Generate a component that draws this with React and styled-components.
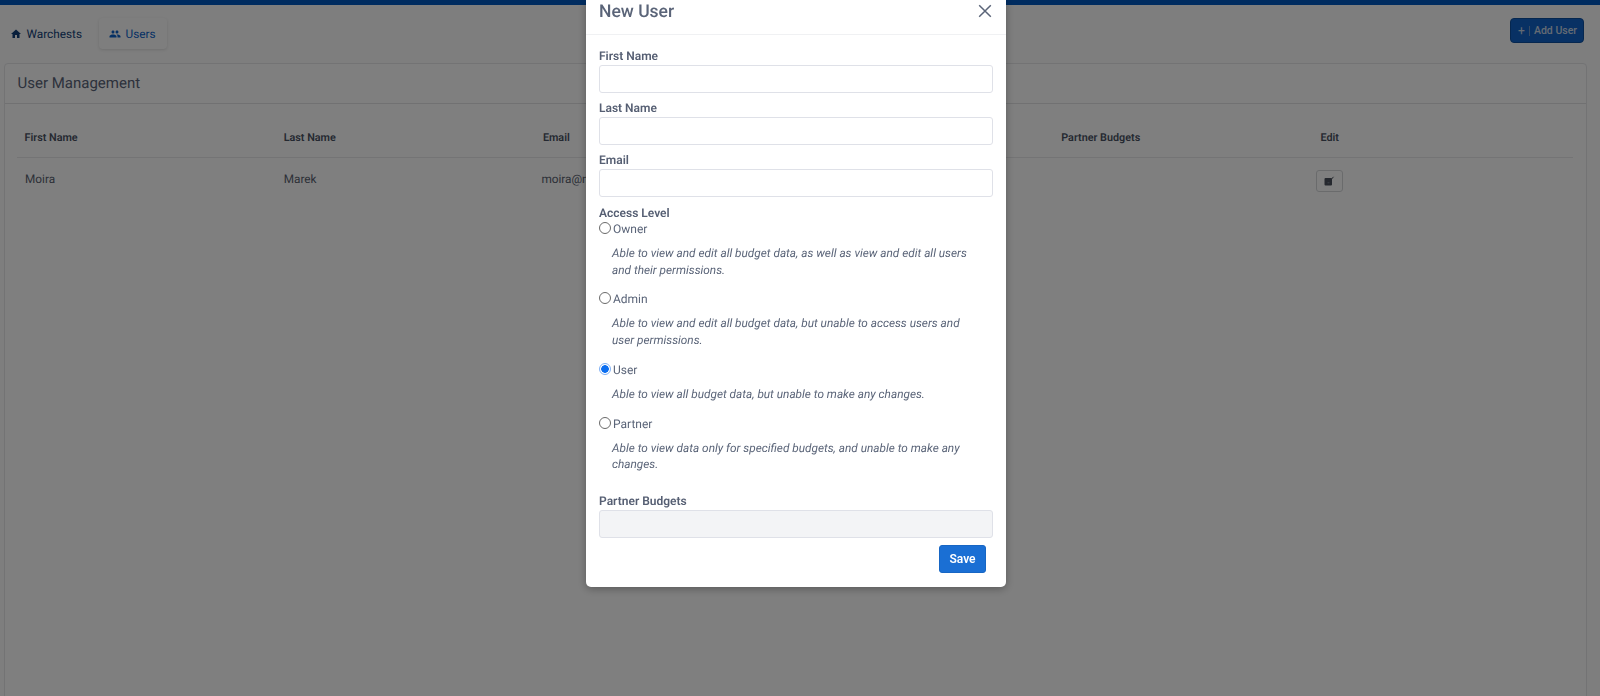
import React from "react";
import styled, { createGlobalStyle } from "styled-components";
import { MdHome, MdPeople } from "react-icons/md";

const Global = createGlobalStyle`
  html, body { margin: 0; padding: 0; height: 100%; overflow: hidden; }
  body {
    font-family: Roboto, "Liberation Sans", sans-serif; background: #fcfcfc; color: #4a5568;
    text-rendering: geometricPrecision;
  }
  * { box-sizing: border-box; }
`;

const TopBar = styled.div`height: 5px; background: #0059c1;`;
const Toolbar = styled.div`
  display: flex; justify-content: space-between; align-items: flex-start;
  height: 58px; padding: 13px 16px 0 0;
`;
const Nav = styled.nav`display: flex; align-items: center; gap: 6px;`;
const NavItem = styled.a`
  display: flex; align-items: center; gap: 4.5px; height: 31px; padding: 0 11px 0 10px;
  font-size: 11.8px; border-radius: 4px;
  color: ${p => (p.$active ? "#0a61c9" : "#123f78")};
  background: ${p => (p.$active ? "#fdfdfd" : "transparent")};
  box-shadow: ${p => (p.$active ? "0 1px 3px rgba(0,0,0,.12)" : "none")};
`;
const AddButton = styled.button`
  display: flex; align-items: center; width: 74px; height: 25px; padding: 0 6px 0 7px;
  background: #1163c9; border: 1px solid #0d4f9f; border-radius: 4px;
  color: #c9d6e6; font: 500 10.5px Roboto, sans-serif; white-space: nowrap;
`;
const Plus = styled.span`font-size: 12px; font-weight: 400;`;
const Divider = styled.span`
  width: 1px; height: 10px; background: #6d94c6; margin: 0 5px 0 4px;
`;
const Card = styled.section`
  margin: 0 13px 0 4px; height: 640px; background: #fff;
  border: 1px solid #e6e7e9; border-radius: 4px;
`;
const CardHeader = styled.header`
  height: 40px; padding: 0 0 2px 12.5px; display: flex; align-items: center;
  font-size: 15px; color: #5a6478; border-bottom: 1px solid #e2e3e5;
`;
const TableWrap = styled.div`padding: 14px 13px 0 12px;`;
const Row = styled.div`
  display: grid; grid-template-columns: repeat(6, 259.2px);
  align-items: center; height: ${p => p.$h}px;
  border-bottom: ${p => (p.$line ? "1px solid #e8e9eb" : "none")};
`;
const Head = styled.div`padding-left: 7.5px; font-size: 10.8px; font-weight: 600; color: #4a5263;`;
const Cell = styled.div`
  padding-left: ${p => p.$indent ?? 7.5}px; font-size: 11.8px; color: #59616f; white-space: nowrap;
`;
const EditButton = styled.button`
  width: 27px; height: 22px; margin: 4px 0 0 -4.5px; padding: 0; display: flex; align-items: center; justify-content: center;
  background: transparent; border: 1px solid #d4d6d9; border-radius: 3px;
`;

const Overlay = styled.div`
  position: fixed; inset: 0; background: rgba(0,0,0,.5); padding-right: 8px;
  display: flex; justify-content: center; align-items: flex-start;
`;
const Modal = styled.div`
  width: 420px; height: 587px; background: #fff; border-radius: 0 0 5px 5px;
  box-shadow: 0 2px 8px rgba(0,0,0,.3);
`;
const ModalHeader = styled.div`
  display: flex; justify-content: space-between; align-items: center;
  height: 35px; padding: 0 14px 12px 13px; border-bottom: 1px solid #f0f1f3;
`;
const Title = styled.h2`margin: 2px 0 0; font-size: 17.5px; font-weight: 500; color: #5a6478;`;
const Form = styled.div`padding: 14px 13px 0;`;
const Label = styled.div`
  font-size: 12px; font-weight: 600; line-height: 14px; color: #565f73;
  margin-top: ${p => p.$mt || 0}px;
`;
const TextInput = styled.div`
  height: 28px; margin-top: 2px; border: 1px solid #dfe1e8; border-radius: 3px;
  background: ${p => (p.$disabled ? "#f3f4f6" : "#fff")};
`;
const RadioRow = styled.div`
  display: flex; align-items: center; gap: 2px; height: 14px;
  margin-top: ${p => p.$mt || 0}px;
  font-size: 12px; color: #5a6478;
`;
const Radio = styled.span`
  width: 12px; height: 12px; border-radius: 50%; margin-top: -2px;
  border: 1px solid ${p => (p.$on ? "#7fb0f5" : "#6a6a6a")};
  background: ${p => (p.$on ? "radial-gradient(circle, #0b6ef0 3.5px, #fff 4.1px)" : "#fff")};
`;
const Desc = styled.p`
  margin: 9px 0 0 13px; font-size: 11.8px; line-height: 16.7px; font-style: italic; color: #5a6478; width: 372px;
`;
const Actions = styled.div`display: flex; justify-content: flex-end; padding: 7px 7px 0 0;`;
const SaveButton = styled.button`
  width: 47px; height: 28px; padding: 1px 0 0; background: #1a6fd4; border: 1px solid #1766c4; border-radius: 3px;
  color: #fff; font: 600 12px Roboto, sans-serif;
`;

const roles = [
  { name: "Owner", mt: 2, text: "Able to view and edit all budget data, as well as view and edit all users and their permissions." },
  { name: "Admin", mt: 14, text: "Able to view and edit all budget data, but unable to access users and user permissions." },
  { name: "User", mt: 14, on: true, text: "Able to view all budget data, but unable to make any changes." },
  { name: "Partner", mt: 14, text: "Able to view data only for specified budgets, and unable to make any changes." },
];

const EditGlyph = () => (
  <svg width="12" height="12" viewBox="0 0 12 12" aria-hidden="true">
    <rect x="1.5" y="3" width="7.5" height="7.5" rx="1" fill="#4a505c" />
    <path d="M6 7 L10.5 1.8" stroke="#4a505c" strokeWidth="1" fill="none" />
    <path d="M4.5 7.8 L6.5 7.8" stroke="#7a8090" strokeWidth="1" fill="none" />
  </svg>
);

const CloseGlyph = () => (
  <svg width="14" height="14" viewBox="0 0 14 14" aria-hidden="true">
    <path d="M1.2 1.2 L12.8 12.8 M12.8 1.2 L1.2 12.8" stroke="#5a6478" strokeWidth="1.5" fill="none" />
  </svg>
);

export default function App() {
  return (
    <>
      <Global />
      <TopBar />
      <Toolbar>
        <Nav>
          <NavItem><MdHome size={12} />Warchests</NavItem>
          <NavItem $active><MdPeople size={12} />Users</NavItem>
        </Nav>
        <AddButton><Plus>+</Plus><Divider />Add User</AddButton>
      </Toolbar>
      <Card>
        <CardHeader>User Management</CardHeader>
        <TableWrap>
          <Row $h={40} $line>
            <Head>First Name</Head><Head>Last Name</Head><Head>Email</Head>
            <Head>Access Level</Head><Head>Partner Budgets</Head><Head>Edit</Head>
          </Row>
          <Row $h={42}>
            <Cell $indent={8}>Moira</Cell><Cell>Marek</Cell><Cell $indent={6}>moira@marek.com</Cell>
            <Cell>User</Cell><Cell></Cell>
            <Cell><EditButton><EditGlyph /></EditButton></Cell>
          </Row>
        </TableWrap>
      </Card>
      <Overlay>
        <Modal>
          <ModalHeader><Title>New User</Title><CloseGlyph /></ModalHeader>
          <Form>
            <Label>First Name</Label><TextInput />
            <Label $mt={8}>Last Name</Label><TextInput />
            <Label $mt={8}>Email</Label><TextInput />
            <Label $mt={9}>Access Level</Label>
            {roles.map(r => (
              <div key={r.name}>
                <RadioRow $mt={r.mt}><Radio $on={r.on} />{r.name}</RadioRow>
                <Desc>{r.text}</Desc>
              </div>
            ))}
            <Label $mt={21}>Partner Budgets</Label><TextInput $disabled />
            <Actions><SaveButton>Save</SaveButton></Actions>
          </Form>
        </Modal>
      </Overlay>
    </>
  );
}
